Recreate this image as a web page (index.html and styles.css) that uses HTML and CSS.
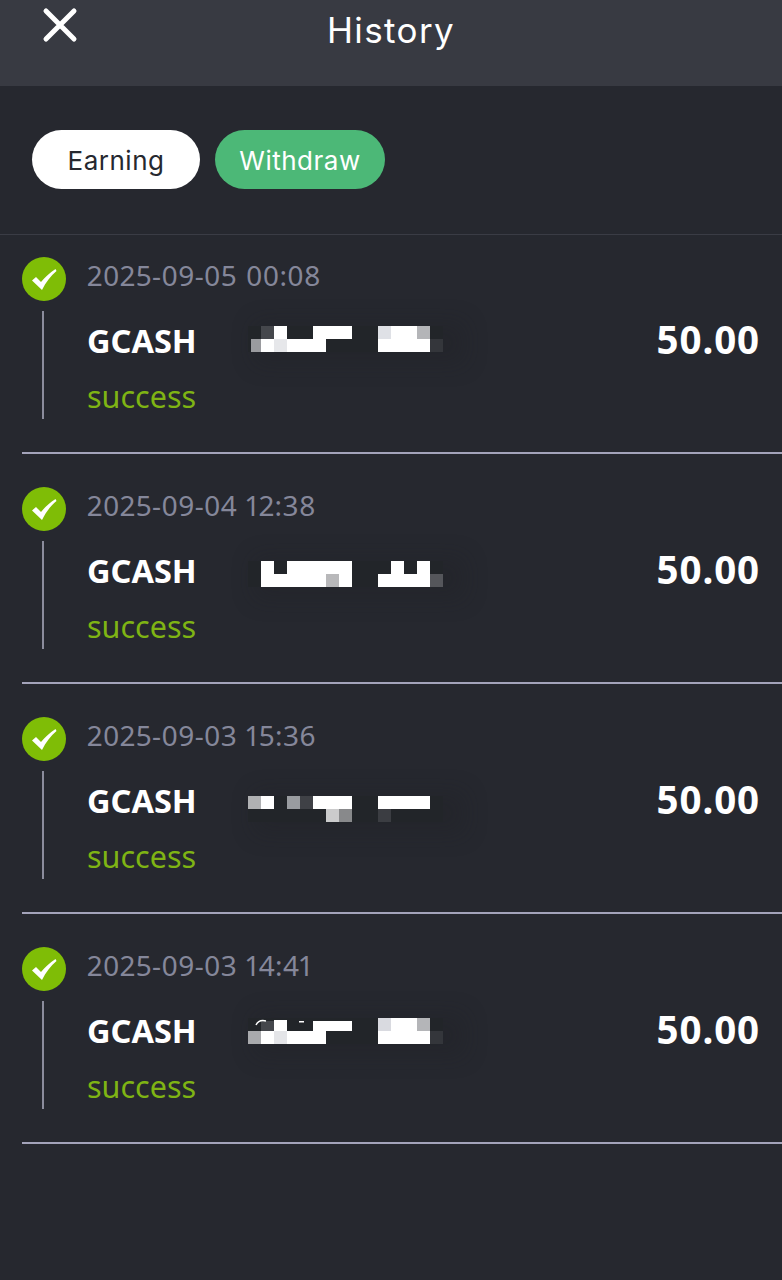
FILE: index.html
```html
<!DOCTYPE html>
<html lang="en">
<head>
<meta charset="utf-8">
<title>History</title>
<link rel="stylesheet" href="styles.css">
</head>
<body>
<header class="topbar">
  <button class="close" aria-label="Close">
    <svg width="36" height="36" viewBox="0 0 36 36"><path d="M4 4 L32 32 M32 4 L4 32" fill="none" stroke="#fff" stroke-width="5" stroke-linecap="round"/></svg>
  </button>
  <h1 class="title">History</h1>
</header>
<nav class="tabs">
  <span class="tab tab-earning">Earning</span>
  <span class="tab tab-withdraw">Withdraw</span>
</nav>
<main class="list">
  <article class="item">
    <svg class="status" width="44" height="44" viewBox="0 0 44 44"><circle cx="22" cy="22" r="22" fill="#7fbd06"/><path d="M10 23.5 L14 20 L19 25 C23 20 27.5 16 33.5 12 L34.5 14 C28.5 19 24 25 20 33 Z" fill="#fff"/></svg>
    <time class="date">2025-09-05 00:08</time>
    <span class="rail"></span>
    <div class="body">
      <div class="account">
        <span class="method">GCASH</span>
        <svg class="mosaic mosaic-1" width="195" height="26" viewBox="0 0 195 26">
          <rect x="13" width="13" height="13" fill="#45474c"/><rect x="26" width="13" height="13" fill="#fff"/><rect x="65" width="39" height="13" fill="#fff"/><rect x="130" width="13" height="13" fill="#dfe1e6"/><rect x="143" width="26" height="13" fill="#fff"/><rect x="169" width="13" height="13" fill="#b4b5b8"/>
          <rect x="3" y="13" width="10" height="13" fill="#9a9b9f"/><rect x="13" y="13" width="13" height="13" fill="#fff"/><rect x="26" y="13" width="13" height="13" fill="#e6e7ea"/><rect x="39" y="13" width="39" height="13" fill="#fff"/><rect x="130" y="13" width="52" height="13" fill="#fff"/><rect x="182" y="13" width="13" height="13" fill="#34363b"/>
        </svg>
      </div>
      <span class="state">success</span>
    </div>
    <strong class="amount">50.00</strong>
  </article>
  <article class="item">
    <svg class="status" width="44" height="44" viewBox="0 0 44 44"><circle cx="22" cy="22" r="22" fill="#7fbd06"/><path d="M10 23.5 L14 20 L19 25 C23 20 27.5 16 33.5 12 L34.5 14 C28.5 19 24 25 20 33 Z" fill="#fff"/></svg>
    <time class="date">2025-09-04 12:38</time>
    <span class="rail"></span>
    <div class="body">
      <div class="account">
        <span class="method">GCASH</span>
        <svg class="mosaic mosaic-2" width="195" height="26" viewBox="0 0 195 26">
          <rect x="13" width="13" height="13" fill="#fff"/><rect x="39" width="65" height="13" fill="#fff"/><rect x="143" width="13" height="13" fill="#fff"/><rect x="169" width="13" height="13" fill="#fff"/>
          <rect x="13" y="13" width="65" height="13" fill="#fff"/><rect x="78" y="13" width="13" height="13" fill="#b8b8ba"/><rect x="91" y="13" width="13" height="13" fill="#fff"/><rect x="130" y="13" width="52" height="13" fill="#fff"/><rect x="182" y="13" width="13" height="13" fill="#55565b"/>
        </svg>
      </div>
      <span class="state">success</span>
    </div>
    <strong class="amount">50.00</strong>
  </article>
  <article class="item">
    <svg class="status" width="44" height="44" viewBox="0 0 44 44"><circle cx="22" cy="22" r="22" fill="#7fbd06"/><path d="M10 23.5 L14 20 L19 25 C23 20 27.5 16 33.5 12 L34.5 14 C28.5 19 24 25 20 33 Z" fill="#fff"/></svg>
    <time class="date">2025-09-03 15:36</time>
    <span class="rail"></span>
    <div class="body">
      <div class="account">
        <span class="method">GCASH</span>
        <svg class="mosaic mosaic-3" width="195" height="26" viewBox="0 0 195 26">
          <rect width="13" height="13" fill="#b0b1b3"/><rect x="13" width="13" height="13" fill="#fff"/><rect x="39" width="13" height="13" fill="#999ca0"/><rect x="52" width="13" height="13" fill="#3f4146"/><rect x="65" width="39" height="13" fill="#fff"/><rect x="130" width="52" height="13" fill="#fff"/>
          <rect x="78" y="13" width="13" height="13" fill="#cbcbcc"/><rect x="91" y="13" width="13" height="13" fill="#88898b"/><rect x="130" y="13" width="13" height="13" fill="#3b3d42"/>
        </svg>
      </div>
      <span class="state">success</span>
    </div>
    <strong class="amount">50.00</strong>
  </article>
  <article class="item">
    <svg class="status" width="44" height="44" viewBox="0 0 44 44"><circle cx="22" cy="22" r="22" fill="#7fbd06"/><path d="M10 23.5 L14 20 L19 25 C23 20 27.5 16 33.5 12 L34.5 14 C28.5 19 24 25 20 33 Z" fill="#fff"/></svg>
    <time class="date">2025-09-03 14:41</time>
    <span class="rail"></span>
    <div class="body">
      <div class="account">
        <span class="method">GCASH</span>
        <svg class="mosaic mosaic-4" width="195" height="26" viewBox="0 0 195 26">
          <rect x="13" y="3" width="13" height="10" fill="#45474c"/><path d="M8 7 C10 3 14 2 18 3" fill="none" stroke="#fff" stroke-width="1.5"/><rect x="26" y="2" width="13" height="11" fill="#fff"/><rect x="51" y="3" width="5" height="1.5" fill="#fff"/><rect x="65" y="3" width="39" height="10" fill="#fff"/><rect x="130" width="13" height="13" fill="#d9dae0"/><rect x="143" width="26" height="13" fill="#fff"/><rect x="169" width="13" height="13" fill="#b4b5b8"/>
          <rect y="13" width="13" height="13" fill="#a9aaad"/><rect x="13" y="13" width="13" height="13" fill="#fff"/><rect x="26" y="13" width="13" height="13" fill="#e4e5e8"/><rect x="39" y="13" width="39" height="13" fill="#fff"/><rect x="130" y="13" width="52" height="13" fill="#fff"/><rect x="182" y="13" width="13" height="13" fill="#34363b"/>
        </svg>
      </div>
      <span class="state">success</span>
    </div>
    <strong class="amount">50.00</strong>
  </article>
</main>
</body>
</html>
```
FILE: styles.css
```css
* { box-sizing: border-box; }
html, body { margin: 0; padding: 0; }
body {
  width: 782px;
  height: 1280px;
  overflow: hidden;
  background: #26282f;
  color: #fff;
  font-family: "Noto Sans", sans-serif;
}
.topbar {
  height: 86px;
  background: #383a42;
  display: flex;
  justify-content: center;
  position: relative;
}
.close {
  position: absolute;
  left: 42px;
  top: 7px;
  width: 36px;
  height: 36px;
  padding: 0;
  border: 0;
  background: none;
  display: block;
}
.close svg { display: block; }
.title {
  margin: 8px 0 0;
  font: 400 35px/44px Inter, sans-serif;
  letter-spacing: 1.4px;
}
.tabs {
  display: flex;
  gap: 15px;
  padding: 44px 0 44px 32px;
  height: 149px;
  border-bottom: 1px solid #3a3c45;
}
.tab {
  height: 59px;
  border-radius: 30px;
  display: flex;
  align-items: center;
  justify-content: center;
  padding-top: 2px;
  font: 400 26px/1 Inter, sans-serif;
  letter-spacing: 0.5px;
}
.tab-earning { width: 168px; background: #fff; color: #26282f; }
.tab-withdraw { width: 170px; background: #4cb877; color: #fff; }
.list {
  display: flex;
  flex-direction: column;
  gap: 33px;
  padding: 22px 0 0 22px;
}
.item {
  display: grid;
  grid-template-columns: 65px 1fr auto;
  grid-template-rows: 44px 108px;
  row-gap: 10px;
  height: 197px;
  padding-right: 22px;
  border-bottom: 2px solid #a3a3ba;
}
.status { display: block; }
.date {
  grid-column: 2 / 4;
  align-self: center;
  margin-top: -8px;
  font-size: 28px;
  line-height: 36px;
  letter-spacing: 0.4px;
  word-spacing: 1px;
  font-variant-numeric: proportional-nums;
  color: #85879a;
}
.rail {
  grid-column: 1;
  width: 2px;
  margin-left: 20px;
  background: #8b8c9c;
}
.body {
  display: flex;
  flex-direction: column;
}
.account {
  display: flex;
  align-items: center;
  height: 40px;
  margin-top: 10px;
}
.method {
  width: 161px;
  font-size: 32.5px;
  font-weight: 700;
  line-height: 40px;
}
.mosaic {
  display: block;
  box-shadow: 14px 4px 22px 8px rgba(30, 32, 34, 0.26);
  background: rgba(33, 35, 39, 0.7);
}
.mosaic-1 { transform: translateY(-2px); }
.mosaic-2 { transform: translateY(3px); }
.mosaic-3 { transform: translateY(8px); }
.state {
  margin-top: 15px;
  font-size: 30.5px;
  line-height: 40px;
  color: #7fb414;
}
.amount {
  margin-top: 6px;
  font-size: 38.5px;
  line-height: 44px;
  letter-spacing: 0.9px;
  font-weight: 700;
  color: #fff;
}
```
